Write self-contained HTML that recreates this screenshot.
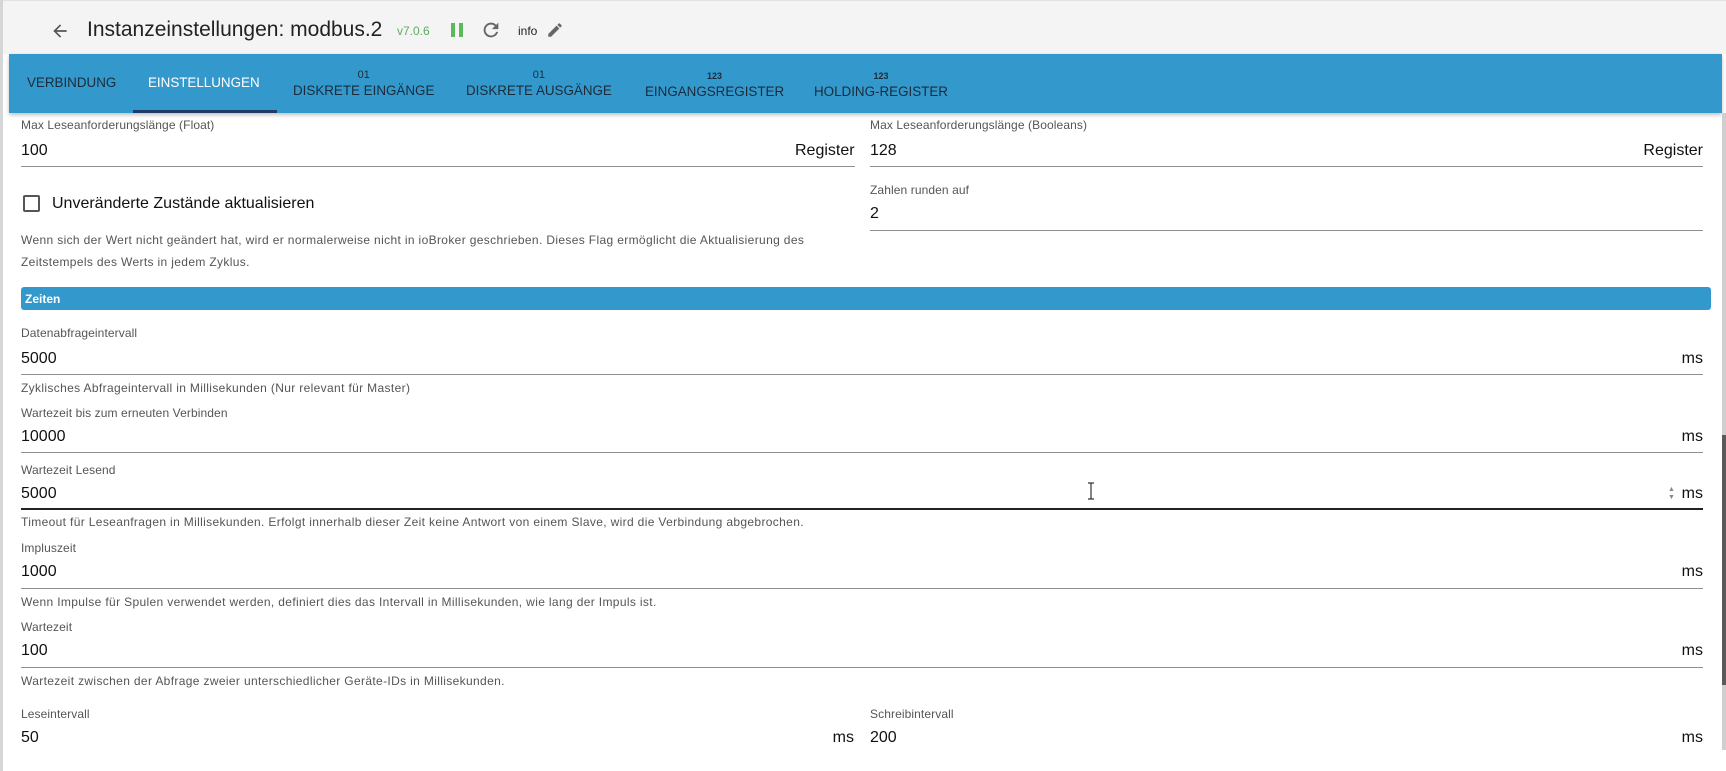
<!DOCTYPE html>
<html><head><meta charset="utf-8"><style>
*{margin:0;padding:0;box-sizing:border-box}
body{width:1726px;height:771px;overflow:hidden;background:#fff;font-family:"Liberation Sans",Arial,sans-serif;position:relative;color:#222}
.a{position:absolute;white-space:nowrap}
.lbl{font-size:12px;color:#555;line-height:14px;letter-spacing:.1px}
.val{font-size:16px;color:#111;line-height:20px}
.hlp{font-size:12px;color:#555;line-height:14px;letter-spacing:.35px}
.ln{position:absolute;height:1px;background:#8f8f8f}
.tab{position:absolute;font-size:13.4px;color:#1b2b3b;line-height:16px;text-align:center}
.sm{font-size:10px;font-weight:bold;line-height:10px;display:block}
</style></head><body>
<div class="a" style="left:0;top:0;width:1726px;height:54px;background:#f4f4f4;border-top:1px solid #e2e2e2"></div>
<div class="a" style="left:0;top:0;width:3px;height:771px;background:#d6d6d6"></div>
<svg class="a" style="left:50px;top:21px" width="20" height="20" viewBox="0 0 24 24"><path d="M20 11H7.830l5.590-5.590L12 4l-8 8 8 8 1.410-1.410L7.830 13H20v-2z" fill="#555"/></svg>
<div class="a" style="left:87px;top:18px;font-size:21px;line-height:24px;color:#222">Instanzeinstellungen: modbus.2</div>
<div class="a" style="left:397px;top:24px;font-size:12px;line-height:14px;color:#5cae5c">v7.0.6</div>
<div class="a" style="left:451px;top:23px;width:4px;height:14px;background:#5cb85c"></div>
<div class="a" style="left:459px;top:23px;width:4px;height:14px;background:#5cb85c"></div>
<svg class="a" style="left:480px;top:19px" width="22" height="22" viewBox="0 0 24 24"><path d="M17.65 6.35A7.96 7.96 0 0 0 12 4a8 8 0 1 0 7.73 10h-2.08A6 6 0 1 1 12 6c1.66 0 3.14.69 4.22 1.78L13 11h7V4l-2.35 2.35z" fill="#666"/></svg>
<div class="a" style="left:518px;top:24px;font-size:12px;line-height:14px;color:#222">info</div>
<svg class="a" style="left:546px;top:21px" width="18" height="18" viewBox="0 0 24 24"><path d="M3 17.25V21h3.75L17.81 9.94l-3.75-3.75L3 17.25zM20.71 7.04a1 1 0 0 0 0-1.41l-2.34-2.34a1 1 0 0 0-1.41 0l-1.83 1.830 3.750 3.750 1.830-1.830z" fill="#666"/></svg>

<div class="a" style="left:9px;top:54px;width:1713px;height:59px;background:#3399cc;box-shadow:0 2px 4px rgba(0,0,0,.25)"></div>
<div class="tab" style="left:27px;top:75px">VERBINDUNG</div>
<div class="tab" style="left:148px;top:75px;color:#fff">EINSTELLUNGEN</div>
<div class="a" style="left:133px;top:110px;width:144px;height:3px;background:#1e3a66"></div>
<div class="tab" style="left:293px;top:70px"><span class="sm" style="font-weight:normal;font-size:11px">01</span><span style="display:block;margin-top:3px">DISKRETE EINGÄNGE</span></div>
<div class="tab" style="left:466px;top:70px"><span class="sm" style="font-weight:normal;font-size:11px">01</span><span style="display:block;margin-top:3px">DISKRETE AUSGÄNGE</span></div>
<div class="tab" style="left:645px;top:71px"><span class="sm" style="font-size:9px">123</span><span style="display:block;margin-top:3px">EINGANGSREGISTER</span></div>
<div class="tab" style="left:814px;top:71px"><span class="sm" style="font-size:9px">123</span><span style="display:block;margin-top:3px">HOLDING-REGISTER</span></div>

<div class="a" style="left:1722px;top:113px;width:4px;height:637px;background:#cfcfcf"></div>
<div class="a" style="left:1722px;top:435px;width:4px;height:250px;background:#5a5a5a"></div>

<div class="a lbl" style="left:21px;top:118px">Max Leseanforderungslänge (Float)</div>
<div class="a val" style="left:21px;top:141px">100</div>
<div class="a val" style="left:795px;width:59px;text-align:right;top:141px">Register</div>
<div class="ln" style="left:21px;top:166px;width:834px"></div>

<div class="a lbl" style="left:870px;top:118px">Max Leseanforderungslänge (Booleans)</div>
<div class="a val" style="left:870px;top:141px">128</div>
<div class="a val" style="left:1640px;width:63px;text-align:right;top:141px">Register</div>
<div class="ln" style="left:870px;top:166px;width:833px"></div>

<div class="a" style="left:23px;top:195px;width:17px;height:17px;border:2px solid #555;border-radius:2px"></div>
<div class="a val" style="left:52px;top:194px">Unveränderte Zustände aktualisieren</div>
<div class="a hlp" style="left:21px;top:233px">Wenn sich der Wert nicht geändert hat, wird er normalerweise nicht in ioBroker geschrieben. Dieses Flag ermöglicht die Aktualisierung des</div>
<div class="a hlp" style="left:21px;top:255px">Zeitstempels des Werts in jedem Zyklus.</div>

<div class="a lbl" style="left:870px;top:183px">Zahlen runden auf</div>
<div class="a val" style="left:870px;top:204px">2</div>
<div class="ln" style="left:870px;top:230px;width:833px"></div>

<div class="a" style="left:21px;top:287px;width:1690px;height:23px;background:#3399cc;border-radius:3px"></div>
<div class="a" style="left:25px;top:292px;font-size:12px;font-weight:bold;color:#fff;line-height:14px">Zeiten</div>

<div class="a lbl" style="left:21px;top:326px">Datenabfrageintervall</div>
<div class="a val" style="left:21px;top:349px">5000</div>
<div class="a val" style="left:1660px;width:43px;text-align:right;top:349px">ms</div>
<div class="ln" style="left:21px;top:374px;width:1682px"></div>
<div class="a hlp" style="left:21px;top:381px">Zyklisches Abfrageintervall in Millisekunden (Nur relevant für Master)</div>

<div class="a lbl" style="left:21px;top:406px">Wartezeit bis zum erneuten Verbinden</div>
<div class="a val" style="left:21px;top:427px">10000</div>
<div class="a val" style="left:1660px;width:43px;text-align:right;top:427px">ms</div>
<div class="ln" style="left:21px;top:452px;width:1682px"></div>

<div class="a lbl" style="left:21px;top:463px">Wartezeit Lesend</div>
<div class="a val" style="left:21px;top:484px">5000</div>
<div class="a" style="left:1668px;top:486px;font-size:7px;color:#888;line-height:8px">▲<br>▼</div>
<div class="a val" style="left:1660px;width:43px;text-align:right;top:484px">ms</div>
<div class="a" style="left:21px;top:508px;width:1682px;height:2px;background:#222"></div>
<svg class="a" style="left:1086px;top:482px" width="10" height="18" viewBox="0 0 10 18"><path d="M2 1h2.5l.5.6.5-.6H8M5 1.6v14.8M2 17h2.5l.5-.6.5.6H8" stroke="#333" stroke-width="1.2" fill="none"/></svg>
<div class="a hlp" style="left:21px;top:515px">Timeout für Leseanfragen in Millisekunden. Erfolgt innerhalb dieser Zeit keine Antwort von einem Slave, wird die Verbindung abgebrochen.</div>

<div class="a lbl" style="left:21px;top:541px">Impluszeit</div>
<div class="a val" style="left:21px;top:562px">1000</div>
<div class="a val" style="left:1660px;width:43px;text-align:right;top:562px">ms</div>
<div class="ln" style="left:21px;top:588px;width:1682px"></div>
<div class="a hlp" style="left:21px;top:595px">Wenn Impulse für Spulen verwendet werden, definiert dies das Intervall in Millisekunden, wie lang der Impuls ist.</div>

<div class="a lbl" style="left:21px;top:620px">Wartezeit</div>
<div class="a val" style="left:21px;top:641px">100</div>
<div class="a val" style="left:1660px;width:43px;text-align:right;top:641px">ms</div>
<div class="ln" style="left:21px;top:667px;width:1682px"></div>
<div class="a hlp" style="left:21px;top:674px">Wartezeit zwischen der Abfrage zweier unterschiedlicher Geräte-IDs in Millisekunden.</div>

<div class="a lbl" style="left:21px;top:707px">Leseintervall</div>
<div class="a val" style="left:21px;top:728px">50</div>
<div class="a val" style="left:810px;width:44px;text-align:right;top:728px">ms</div>
<div class="a lbl" style="left:870px;top:707px">Schreibintervall</div>
<div class="a val" style="left:870px;top:728px">200</div>
<div class="a val" style="left:1660px;width:43px;text-align:right;top:728px">ms</div>
</body></html>
